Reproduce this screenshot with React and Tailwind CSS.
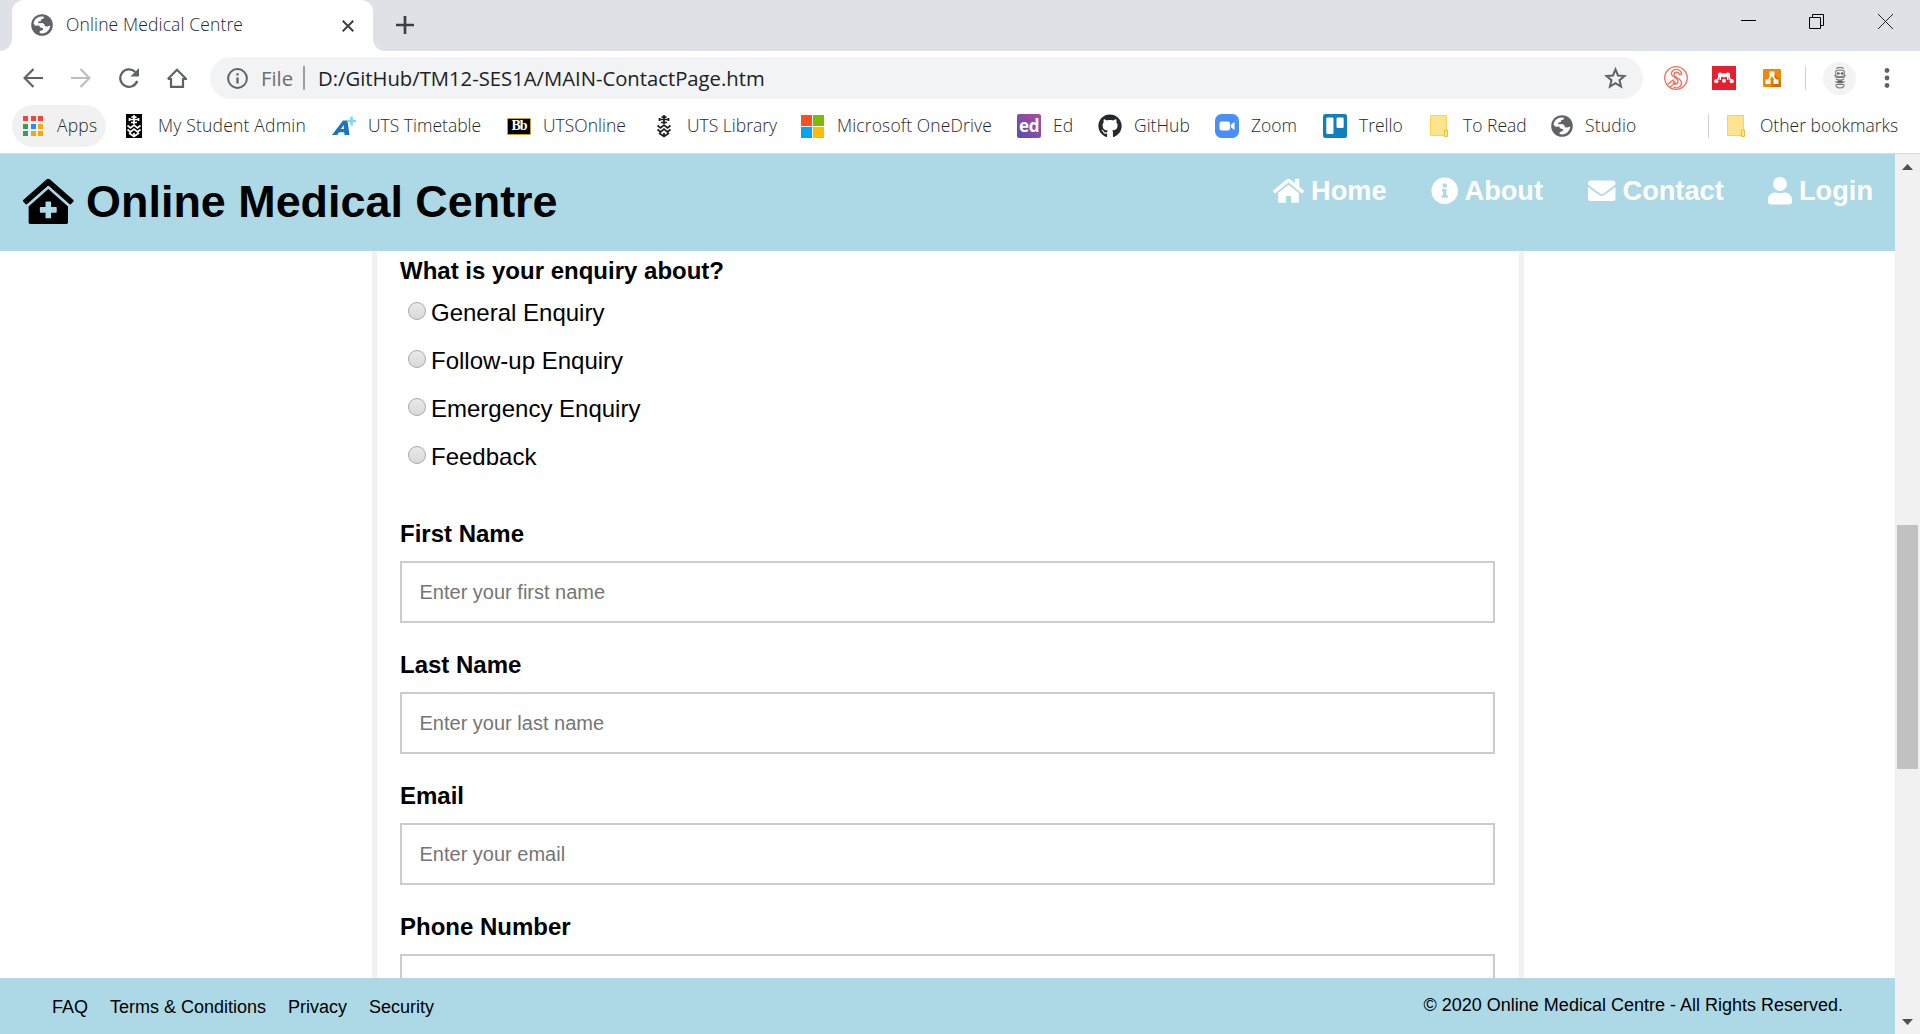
import { FaHome, FaInfoCircle, FaEnvelope, FaUser, FaClinicMedical, FaGithub } from "react-icons/fa";

const Globe = () => (
  <svg className="size-[22px] shrink-0" viewBox="0 0 22 22">
    <circle cx="11" cy="11" r="10.800" fill="#5f6368" />
    <path
      fill="#fff"
      d="M2.600 9.800C3 6 6 3 10 2.600L13 2.800 12.600 4.600 9.800 5.400 10.200 7 7.200 7.600 7.400 9.200 11.400 9 13.600 10.600 13.800 12.200 16.400 12.400 19.300 11.500C19 15.800 15.600 19.300 11 19.400L8.600 19 8.800 17 11.600 16.200 12.200 14.200 9.400 13.400 8 11.600 4.400 11.800z"
    />
  </svg>
);

const Crest = ({ invert }) => (
  <svg className={invert ? "h-6 w-4 shrink-0 bg-black" : "h-6 w-4 shrink-0"} viewBox="0 0 16 24">
    <g fill="none" stroke={invert ? "#fff" : "#1c1c1c"} strokeWidth="1.700">
      <path d="M8 1v9M3 5.500h10M5.500 3.200h5M3.500 4v3M12.500 4v3M5 8.500h6" />
      <path d="M1.500 11.500l3 2.500L8 11l3.500 3 3-2.500M1.500 15.500l3 2.500L8 15l3.500 3 3-2.500M3 19l5 3.500 5-3.500M8 19v4" />
    </g>
  </svg>
);

const Folder = () => (
  <svg className="h-[22px] w-[18px] shrink-0" viewBox="0 0 18 22">
    <path d="M.5 .5h16v20H.5z" fill="#ffe48f" stroke="#fbd54e" />
    <path d="M14.500 21.500v-6.500h3v6.500z" fill="#ffe48f" stroke="#e8bf3a" />
  </svg>
);

const AppsIcon = () => (
  <span className="grid size-5 grid-cols-3 gap-[2.500px]">
    {["bg-[#f94336]", "bg-[#f94336]", "bg-[#f94336]", "bg-[#34a056]", "bg-[#1e90ff]", "bg-[#f7a80d]", "bg-[#34a056]", "bg-[#f7a80d]", "bg-[#f7a80d]"].map((c, i) => (
      <span key={i} className={c} />
    ))}
  </span>
);

const APlus = () => (
  <svg className="size-6 shrink-0" viewBox="0 0 24 24">
    <path d="M0 21 11 6.500h4.500L17.500 21h-5l-.3-2.800H7L5.300 21zM9 15h3l-.3-4z" fill="#1f74bd" fillRule="evenodd" />
    <path d="M19.500 2.500v9M15 7h9" stroke="#7fd6ef" strokeWidth="2.600" />
  </svg>
);

const Bb = () => (
  <span className="flex h-[17px] w-6 items-center justify-center rounded-[1px] border border-[#c9a227] bg-black font-['Liberation_Serif',serif] text-[14px] leading-none font-bold tracking-[-1px] text-white">Bb</span>
);

const Microsoft = () => (
  <span className="grid size-[23px] grid-cols-2 gap-px">
    <span className="bg-[#f9511e]" />
    <span className="bg-[#80bb03]" />
    <span className="bg-[#02a5f1]" />
    <span className="bg-[#ffba03]" />
  </span>
);

const Ed = () => (
  <span className="flex size-6 items-center justify-center rounded-[2px] bg-linear-to-tr from-[#5a4bb0] to-[#b0489c] pb-px font-['Open_Sans',sans-serif] text-[17px] leading-none font-bold tracking-[-0.500px] text-white">ed</span>
);

const ZoomIcon = () => (
  <svg className="size-6" viewBox="0 0 24 24">
    <rect width="24" height="24" rx="6.500" fill="#4a8ff9" />
    <rect x="4.500" y="7.500" width="10.500" height="9" rx="2" fill="#fff" />
    <path d="M15.800 10.800 19.500 8v8l-3.700-2.800z" fill="#fff" />
  </svg>
);

const Trello = () => (
  <svg className="size-6" viewBox="0 0 24 24">
    <rect width="24" height="24" rx="2.500" fill="#0f7fc1" />
    <rect x="3.300" y="3.500" width="7.200" height="16.500" rx="1.300" fill="#fff" />
    <rect x="13.500" y="3.500" width="7.200" height="10.500" rx="1.300" fill="#fff" />
  </svg>
);

const bookmarks = [
  { label: "My Student Admin", icon: <Crest invert />, item: "w-[206px] tracking-[0.200px]", box: "w-8" },
  { label: "UTS Timetable", icon: <APlus />, item: "w-[175px]", box: "w-9" },
  { label: "UTSOnline", icon: <Bb />, item: "w-[149px]", box: "w-9" },
  { label: "UTS Library", icon: <Crest />, item: "w-[145px]", box: "w-[31px]" },
  { label: "Microsoft OneDrive", icon: <Microsoft />, item: "w-[216px] tracking-[0.130px]", box: "w-9" },
  { label: "Ed", icon: <Ed />, item: "w-[81px]", box: "w-9" },
  { label: "GitHub", icon: <FaGithub className="size-6 text-[#24292e]" />, item: "w-[117px]", box: "w-9" },
  { label: "Zoom", icon: <ZoomIcon />, item: "w-[108px]", box: "w-9" },
  { label: "Trello", icon: <Trello />, item: "w-[107px]", box: "w-9" },
  { label: "To Read", icon: <Folder />, item: "w-[121px]", box: "w-[33px]" },
  { label: "Studio", icon: <Globe />, item: "w-[157px] tracking-[0.200px]", box: "w-[34px]" },
];

const TabBar = () => (
  <div className="flex h-[51px] bg-[#dee1e6]">
    <div className="w-3 bg-white">
      <div className="h-full rounded-br-[12px] bg-[#dee1e6]" />
    </div>
    <div className="flex w-[361px] items-center rounded-t-[12px] bg-white pb-px pl-[19px]">
      <Globe />
      <span className="mb-px ml-[13px] w-[276px] text-[17.500px] tracking-[0.130px] whitespace-nowrap">Online Medical Centre</span>
      <svg className="mt-px size-[12px]" viewBox="0 0 12 12" stroke="#3c4043" strokeWidth="2">
        <path d="M.7.7l10.600 10.600M11.300.7.7 11.300" />
      </svg>
    </div>
    <div className="flex-1 bg-white">
      <div className="flex h-full items-center rounded-bl-[12px] bg-[#dee1e6] pb-px pl-[23px]">
        <svg className="size-[18px]" viewBox="0 0 18 18" stroke="#3c4043" strokeWidth="2.700">
          <path d="M9 0v18M0 9h18" />
        </svg>
        <div className="ml-auto flex items-start gap-[53px] pr-[27px] pb-[7px]">
          <span className="mt-[6px] h-px w-[15px] bg-black" />
          <svg className="mr-px size-[15px]" viewBox="0 0 15 15" fill="none" stroke="#000">
            <path d="M.5 3.500h11v11H.5zM3.500 3.500v-3h11v11h-3" />
          </svg>
          <svg className="size-[15px]" viewBox="0 0 15 15" stroke="#222">
            <path d="M0 0l15 15M15 0 0 15" />
          </svg>
        </div>
      </div>
    </div>
  </div>
);

const Toolbar = () => (
  <div className="flex h-[54px] items-center">
    <div className="flex w-[210px] items-center gap-7 pl-[23px]">
      <svg className="size-5" viewBox="0 0 20 20" fill="none" stroke="#5f6368" strokeWidth="2.200">
        <path d="M20 10H2M10.500 1 1.600 10l8.900 9" />
      </svg>
      <svg className="size-5" viewBox="0 0 20 20" fill="none" stroke="#bcbec1" strokeWidth="2.200">
        <path d="M0 10h18M9.500 1l8.900 9-8.900 9" />
      </svg>
      <svg className="size-5" viewBox="0 0 20 20" fill="none" stroke="#5f6368" strokeWidth="2.300">
        <path d="M18.200 13A8.700 8.700 0 1 1 16.200 4" />
        <path d="M20 0v8.500h-8.500z" fill="#5f6368" stroke="none" />
      </svg>
      <svg className="size-5" viewBox="0 0 20 20" fill="none" stroke="#5f6368" strokeWidth="2.200">
        <path d="M4 10v8.800h12V10M.8 11 10 1.700 19.200 11H16M.8 11H4" />
      </svg>
    </div>
    <div className="flex h-[42px] w-[1433px] items-center rounded-full bg-[#f1f3f4] pl-[17px] text-[20.250px] whitespace-nowrap">
      <svg className="size-[21px]" viewBox="0 0 21 21" fill="none" stroke="#5f6368" strokeWidth="2">
        <circle cx="10.500" cy="10.500" r="9.400" />
        <path d="M10.500 9.500v6M10.500 5.300v2.300" strokeWidth="2.300" />
      </svg>
      <span className="ml-[13px] w-[42px] font-normal text-[#6a6e73]">File</span>
      <span className="h-6 w-0.5 bg-[#9b9ea2]" />
      <span className="ml-[13px] font-normal text-[#202124]">D:/GitHub/TM12-SES1A/MAIN-ContactPage.htm</span>
      <svg className="mr-4 ml-auto h-[22px] w-[23px]" viewBox="0 0 23 22" fill="none" stroke="#5f6368" strokeWidth="2">
        <path d="M11.500 2.400l2.500 6.100 6.500.5-5 4.200 1.600 6.400-5.600-3.500-5.600 3.500 1.600-6.400-5-4.200 6.500-.5z" />
      </svg>
    </div>
    <svg className="ml-[21px] size-6" viewBox="0 0 24 24" fill="none" stroke="#f0705c" strokeWidth="1.300">
      <circle cx="12" cy="12" r="11.300" />
      <path d="M17.500 8.500C18 3 9.500 1.500 7.500 6.500c-1.500 4.500 6.500 5 6.500 9 0 3.500-5 3.500-5 .5M15 8.500c0-3-5-3-5 0 0 3.500 7.500 3.500 7.500 8.500 0 4-5 6-8 4M3.500 18.500 9 14l2.500 3L6 21M17.500 8.500H15" />
    </svg>
    <svg className="ml-6 size-6 bg-[#e61f2e]" viewBox="0 0 24 24" fill="#fff">
      <circle cx="4.300" cy="15.200" r="2.100" />
      <circle cx="12" cy="14.800" r="2" />
      <circle cx="19.700" cy="15.200" r="2.100" />
      <circle cx="8.200" cy="8.800" r="2.400" />
      <circle cx="15.800" cy="8.800" r="2.400" />
      <circle cx="12" cy="9.300" r="2.300" />
      <path d="M5.500 14l2-4.500M18.500 14l-2-4.500M8.500 10l-.3 4M15.500 10l.3 4" stroke="#fff" strokeWidth="1.500" />
    </svg>
    <svg className="ml-[27px] size-[18px]" viewBox="0 0 18 18">
      <rect width="18" height="18" rx="1" fill="#f08705" />
      <path d="M11 5l7 7v6H8z" fill="#d96b00" />
      <path d="M9 5.500 5 12M9 5.500l4 6.500" stroke="#fff" strokeWidth="1.500" />
      <path d="M6.500 2.500h5v4.500h-5zM2.500 10.500h5V15h-5zM10.500 10.500h5V15h-5z" fill="#fff" />
    </svg>
    <span className="ml-6 h-6 w-px bg-[#cfd0d2]" />
    <span className="ml-[17px] flex size-[33px] items-center justify-center rounded-full bg-[#f3f3f3]">
      <svg className="h-[22px] w-[12px]" viewBox="0 0 14 22" preserveAspectRatio="none" fill="none" stroke="#777" strokeWidth="1.100">
        <path d="M2.500 1.500Q7-.5 11.500 1.500M2 4q5-2 10 0v4.500Q7 11 2 8.500zM.5 8l2 2.500h9l2-2.500M2 12q5 2 10 0M1.500 14.500q5.500 3 11 0M2.500 17.500h9v2q-4.500 3-9 0z" />
        <path d="M3.500 6.500h3M8 6.500h3M4 14.500h6" strokeWidth="1.800" stroke="#555" />
      </svg>
    </span>
    <svg className="ml-[28px] h-5 w-[6px]" viewBox="0 0 6 20" fill="#5f6368">
      <circle cx="3" cy="2.500" r="2.400" />
      <circle cx="3" cy="10" r="2.400" />
      <circle cx="3" cy="17.500" r="2.400" />
    </svg>
  </div>
);

const Bookmarks = () => (
  <div className="flex h-[49px] items-start border-b border-[#dadce0] pl-3 text-[17.500px] whitespace-nowrap">
    <div className="flex h-[42px] w-[94px] items-center rounded-full bg-[#f1f1f1] pl-[11px]">
      <AppsIcon />
      <span className="mb-px ml-[14px] tracking-[0.200px]">Apps</span>
    </div>
    <div className="flex h-[42px] flex-1 items-center pl-5">
      {bookmarks.map((b) => (
        <div key={b.label} className={`flex shrink-0 items-center ${b.item}`}>
          <span className={`shrink-0 ${b.box}`}>{b.icon}</span>
          <span className="mb-px">{b.label}</span>
        </div>
      ))}
      <span className="h-6 w-px bg-[#cfd0d2]" />
      <span className="ml-[18px] w-[33px]"><Folder /></span>
      <span className="mb-px">Other bookmarks</span>
    </div>
  </div>
);

const nav = [
  { label: "Home", Icon: FaHome, size: "w-[31px]", item: "w-[158px]", gap: "ml-[7px]" },
  { label: "About", Icon: FaInfoCircle, size: "w-[27.500px]", item: "w-[157px]", gap: "ml-1.5" },
  { label: "Contact", Icon: FaEnvelope, size: "w-[27.500px]", item: "w-[180px]", gap: "ml-[7px]" },
  { label: "Login", Icon: FaUser, size: "w-[24px]", item: "w-[127px]", gap: "ml-[7px]" },
];

const Header = () => (
  <header className="flex h-[97px] shrink-0 items-start bg-[#add8e6]">
    <div className="flex items-center pt-[22px] pl-[23px]">
      <FaClinicMedical className="h-[45px] w-[50.600px]" />
      <h1 className="ml-[12.500px] text-[44.900px] leading-[51px] font-bold">Online Medical Centre</h1>
    </div>
    <nav className="ml-auto flex pt-[21px] text-[27.200px] leading-8 font-bold text-white">
      {nav.map(({ label, Icon, size, item, gap }) => (
        <a key={label} className={`flex items-center ${item}`}>
          <Icon className={`h-[27.500px] ${size}`} />
          <span className={gap}>{label}</span>
        </a>
      ))}
    </nav>
  </header>
);

const Field = ({ label, placeholder }) => (
  <div className="h-[131px]">
    <label className="block h-[41px] text-[24px] leading-[27px] font-bold">{label}</label>
    <input
      className="block h-[62px] w-full border-2 border-[#cccccc] bg-white px-[17.500px] text-[20px] placeholder:text-[#757575]"
      placeholder={placeholder}
    />
  </div>
);

const Form = () => (
  <main className="flex min-h-0 flex-1 justify-start overflow-hidden bg-white pl-[372px]">
    <form className="h-[900px] w-[1152px] border-x-[5px] border-[#f1f1f1] px-[23px] pt-[6px] pr-6 text-[24px]">
      <p className="h-[31px] leading-[27px] font-bold">What is your enquiry about?</p>
      {["General Enquiry", "Follow-up Enquiry", "Emergency Enquiry", "Feedback"].map((t) => (
        <label key={t} className="flex h-12 items-center pl-2">
          <span className="mb-[3px] size-[18px] rounded-full border border-[#a9a9a9] bg-linear-to-b from-[#e9e9e9] to-[#d9d9d9]" />
          <span className="ml-[5px] leading-[27px]">{t}</span>
        </label>
      ))}
      <div className="pt-[40px]">
        <Field label="First Name" placeholder="Enter your first name" />
        <Field label="Last Name" placeholder="Enter your last name" />
        <Field label="Email" placeholder="Enter your email" />
        <Field label="Phone Number" placeholder="" />
      </div>
    </form>
  </main>
);

const Footer = () => (
  <footer className="flex h-14 shrink-0 items-start bg-[#add8e6] pr-[52px] pl-[52px] text-[18px] leading-5">
    <div className="flex gap-[22px] pt-[19px]">
      <a>FAQ</a>
      <a>Terms &amp; Conditions</a>
      <a>Privacy</a>
      <a>Security</a>
    </div>
    <p className="ml-auto pt-[17px]">© 2020 Online Medical Centre - All Rights Reserved.</p>
  </footer>
);

const Scrollbar = () => (
  <div className="flex w-[25px] flex-col items-center bg-[#f1f1f1] pt-[10px] pb-[9px]">
    <svg className="h-[6px] w-[11px]" viewBox="0 0 11 6" fill="#505050"><path d="M0 6 5.500 0 11 6z" /></svg>
    <div className="mt-[355px] h-[244px] w-[21px] bg-[#c1c1c1]" />
    <svg className="mt-auto h-[6px] w-[11px]" viewBox="0 0 11 6" fill="#505050"><path d="M0 0h11L5.500 6z" /></svg>
  </div>
);

export default function App() {
  return (
    <div className="flex h-[1034px] w-[1920px] flex-col overflow-hidden bg-white">
      <div className="font-['Open_Sans',sans-serif] font-[350] text-[#26292c]">
        <TabBar />
        <Toolbar />
        <Bookmarks />
      </div>
      <div className="flex min-h-0 flex-1 font-['Liberation_Sans',Arial,sans-serif] text-black">
        <div className="flex w-[1895px] flex-col">
          <Header />
          <Form />
          <Footer />
        </div>
        <Scrollbar />
      </div>
    </div>
  );
}
